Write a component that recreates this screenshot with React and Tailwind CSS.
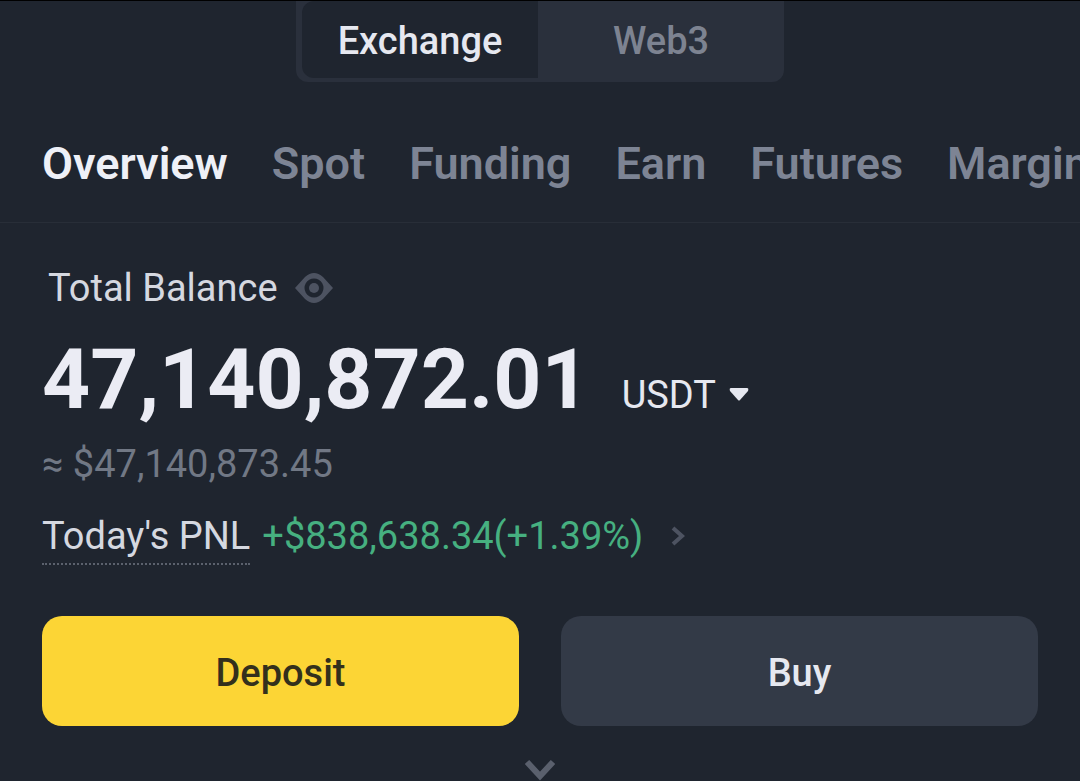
import { useState } from 'react'

const tabs = ['Overview', 'Spot', 'Funding', 'Earn', 'Futures', 'Margin']

function EyeIcon() {
    return (
        <svg width="40" height="32" viewBox="0 0 40 32" aria-hidden="true">
            <path
                fillRule="evenodd"
                fill="#4d5361"
                d="M1 16 L11 5 Q20 -3 29 5 L39 16 L29 27 Q20 35 11 27 Z M20 6.500 a9.500 9.500 0 1 0 0.010 0 Z"
            />
            <circle cx="20" cy="16" r="5" fill="#4d5361" />
        </svg>
    )
}

export default function App() {
    const [mode, setMode] = useState('Exchange')
    const [tab, setTab] = useState('Overview')

    return (
        <div className="min-h-screen overflow-hidden border-t border-black bg-[#1f252f] font-['Roboto',sans-serif] text-[#e6e8f0]">
            <div className="mx-auto grid h-[81px] w-[488px] grid-cols-[236px_1fr] rounded-b-xl bg-[#2a303c] pb-1 pl-1.5">
                {['Exchange', 'Web3'].map((name) => (
                    <button
                        key={name}
                        type="button"
                        onClick={() => setMode(name)}
                        className={
                            mode === name
                                ? 'rounded-l-xl bg-[#1f252f] pt-1 text-[38px] font-medium'
                                : 'pt-1 text-[38px] font-medium text-[#7d8391]'
                        }
                    >
                        {name}
                    </button>
                ))}
            </div>

            <nav className="mt-[54px] flex gap-11 overflow-hidden border-b border-[#282e38] pb-[30px] pl-[42px]">
                {tabs.map((name) => (
                    <button
                        key={name}
                        type="button"
                        onClick={() => setTab(name)}
                        className={
                            tab === name
                                ? 'shrink-0 text-[45px] leading-[56px] font-semibold text-[#eef0f7]'
                                : 'shrink-0 text-[45px] leading-[56px] font-semibold text-[#7d8494]'
                        }
                    >
                        {name}
                    </button>
                ))}
            </nav>

            <main className="px-[42px] pt-[41px]">
                <div className="flex items-center gap-4 pl-1.5">
                    <h1 className="text-[38px] leading-[48px] text-[#d5d8e0]">Total Balance</h1>
                    <button type="button" aria-label="Hide balance">
                        <EyeIcon />
                    </button>
                </div>

                <div className="mt-7 flex items-baseline gap-8">
                    <span className="text-[84px] leading-[80px] font-bold text-[#ebecf4]">47,140,872.01</span>
                    <div className="flex items-center gap-3">
                        <select
                            aria-label="Currency"
                            className="appearance-none bg-transparent text-[38px] leading-[48px] text-[#e6e8f0] outline-none"
                        >
                            <option>USDT</option>
                        </select>
                        <svg width="20" height="16" viewBox="0 0 20 16" fill="#e6e8f0" aria-hidden="true">
                            <path d="M2 1h16q2 0 1 3l-8 9q-1 1-2 0l-8-9q-1-3 1-3z" />
                        </svg>
                    </div>
                </div>

                <p className="mt-5 text-[38px] leading-[48px] text-[#717885]">≈ $47,140,873.45</p>

                <div className="mt-6 flex items-start gap-3 text-[38px] leading-[48px]">
                    <span className="border-b-2 border-dotted border-[#5b616d] pb-[3px] text-[#d5d8e0]">Today's PNL</span>
                    <a href="#" className="flex items-center gap-7 text-[#46b080]">
                        +$838,638.34(+1.39%)
                        <svg width="14" height="20" viewBox="0 0 14 20" fill="none" stroke="#4d5361" strokeWidth="4" aria-hidden="true">
                            <path d="M2 2l9 8-9 8" />
                        </svg>
                    </a>
                </div>

                <div className="mt-[51px] grid grid-cols-2 gap-[42px]">
                    <button type="button" className="h-[110px] rounded-[20px] bg-[#fcd535] pt-1 text-[38px] font-medium text-[#33301c]">
                        Deposit
                    </button>
                    <button type="button" className="h-[110px] rounded-[20px] bg-[#333a47] pt-1 text-[38px] font-medium">
                        Buy
                    </button>
                </div>

                <button type="button" aria-label="Show more" className="mx-auto mt-[34px] block">
                    <svg width="30" height="21" viewBox="0 0 30 21" fill="none" stroke="#5a606d" strokeWidth="6" aria-hidden="true">
                        <path d="M2 2l13 14L28 2" />
                    </svg>
                </button>
            </main>
        </div>
    )
}
